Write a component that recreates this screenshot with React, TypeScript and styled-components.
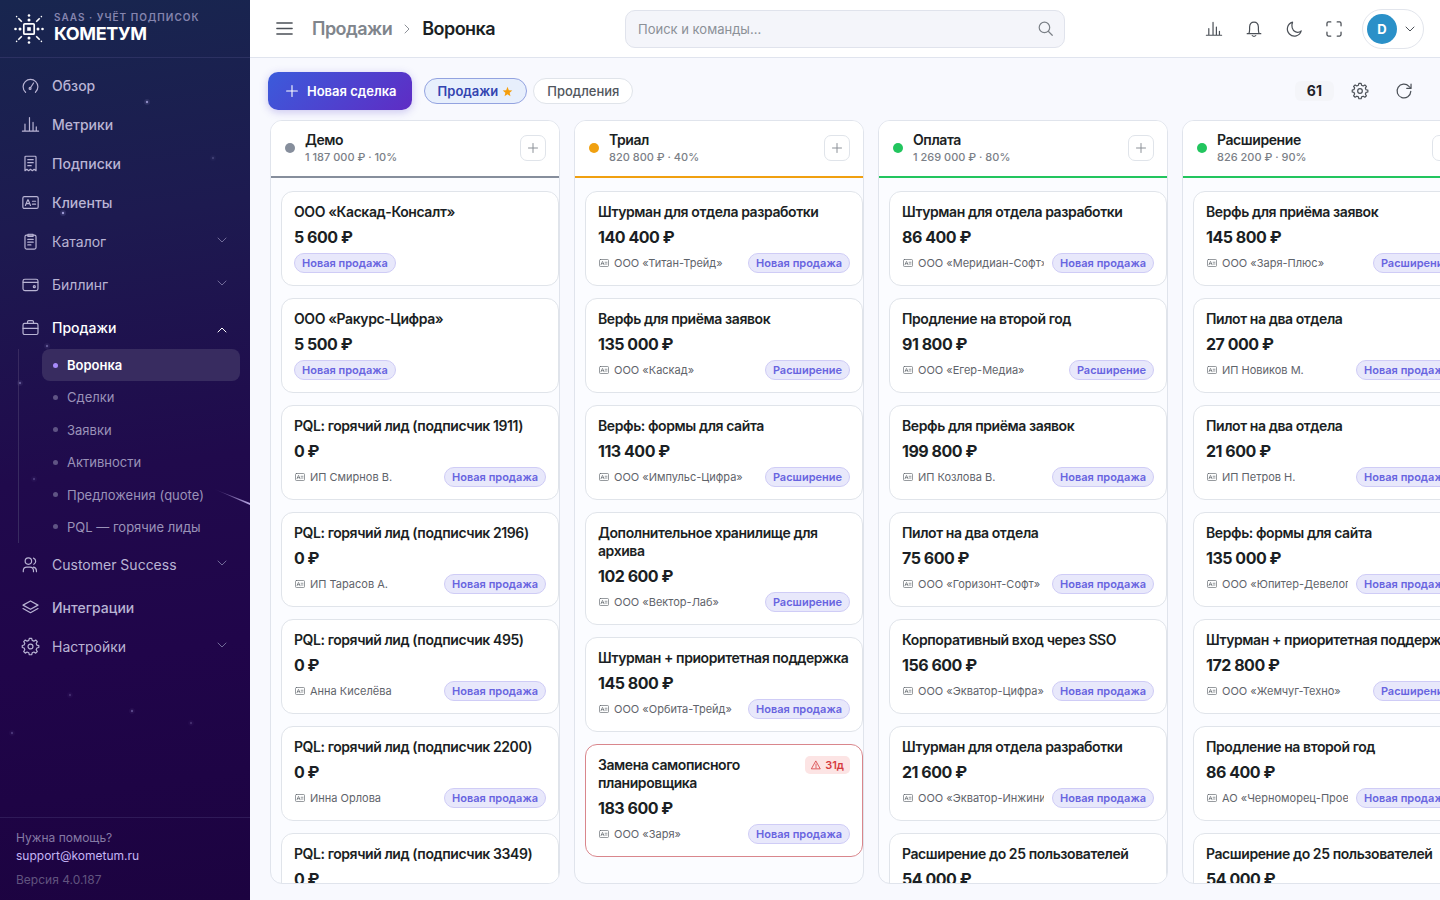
import React from "react";
import styled, { createGlobalStyle, css } from "styled-components";

const GlobalStyle = createGlobalStyle`
  *, *::before, *::after { box-sizing: border-box; }
  body { margin: 0; background: #f8f9fe; color: #1f2329; font-family: Inter, "Liberation Sans", sans-serif; font-size: 14px; }
  button, input { font: inherit; color: inherit; }
  button { cursor: pointer; padding: 0; border: 0; background: none; }
  a { color: inherit; text-decoration: none; }
  h2, h3, p, ul, ol { margin: 0; padding: 0; font-size: inherit; }
  ul, ol { list-style: none; }
`;

/* ---------- icons ---------- */

const paths = {
  gauge: <><path d="M4.200 18A8.700 8.700 0 0 1 1.300 11.600a8.700 8.700 0 0 1 17.400 0 8.700 8.700 0 0 1-2.900 6.400" /><path d="M10.200 12.400 13.600 7" /><circle cx="9.500" cy="13.400" r="1.100" /></>,
  chart: <><path d="M.5 17.800h19M3.500 17.800V9.500M8.800 17.800v-16M13 17.800V7.500M16.800 17.800v-5" /></>,
  receipt: <><path d="M3.500 18.500V2.500q0-1 1-1h11q1 0 1 1v16l-2.200-1.700-2.100 1.700-2.200-1.700-2.200 1.700-2.100-1.700z" /><path d="M6.800 5.500h6.400M6.800 9h6.400M6.800 12.500h4" /></>,
  idcard: <><rect x="1" y="3" width="18" height="14" rx="1.800" /><path d="M4 13.500 6.800 6.800h.4L10 13.500M5 11.300h4M12.300 8.500H16M12.300 12H16" /></>,
  clipboard: <><rect x="3.500" y="2.500" width="13" height="16.500" rx="1.800" /><path d="M7 1.500h6v2.600H7zM6.800 7.500h6.400M6.800 10.800h6.400M6.800 14h3.700" /></>,
  wallet: <><rect x="1.200" y="3.800" width="17.600" height="13.400" rx="2.200" /><path d="M1.500 7.500h17" /><circle cx="14.500" cy="12.500" r="1.200" /></>,
  briefcase: <><rect x="1.200" y="5.200" width="17.600" height="13" rx="1.800" /><path d="M1.200 11h17.600M6.500 5V3.300q0-1.500 1.500-1.500h4q1.500 0 1.500 1.500V5" /></>,
  users: <><circle cx="7.500" cy="6" r="3.800" /><path d="M1.500 18.500v-1.200q0-4.300 4.300-4.300h3.400q4.300 0 4.300 4.300v1.200M13.500 2.500q2.600 1.200 2.600 3.700t-2.200 3.600M13.500 13q3.500.8 3.500 4.500v1" /></>,
  layers: <><path d="m10 2.300 8.800 4.900-8.800 4.900-8.800-4.900zM1.200 11.300l8.800 4.900 8.800-4.900" /></>,
  gear: <><circle cx="10" cy="10" r="2.900" /><path d="m8 2.800.6-2.300h2.800l.6 2.300 2 .9 2.100-1.300 1.900 1.900-1.300 2.100.8 2 2.300.6v2.200l-2.300.6-.8 2 1.300 2.100-1.900 1.900-2.100-1.300-2 .9-.6 2.300H8.600L8 17.400l-2-.9-2.100 1.300L2 15.900l1.300-2.100-.8-2-2.200-.6V8.800l2.200-.6.8-2L2 4.300l1.900-1.900L6 3.700z" /></>,
  down: <path d="m2 6 8 8 8-8" />,
  up: <path d="m2 14 8-8 8 8" />,
  right: <path d="m6 2 8 8-8 8" />,
  menu: <path d="M1 3.500h18M1 10h18M1 16.500h18" />,
  search: <><circle cx="8.600" cy="8.600" r="7" /><path d="m14 14 5 5" /></>,
  bell: <><path d="M1.500 15.800h17M3.500 15.800q1-1.800 1-4.800V7.500Q4.800 1.300 10 1.300T15.500 7.500V11q0 3 1 4.800M7.800 18.300q2.200 1.700 4.400 0" /></>,
  moon: <path d="M8.200 1.500A8.800 8.800 0 1 0 19 12.300a6.800 6.800 0 0 1-7.500 1C7.900 11.500 6.200 6.300 8.200 1.500z" />,
  expand: <path d="M1.200 6V3q0-1.800 1.800-1.800h3M14 1.200h3q1.800 0 1.800 1.800v3M18.800 14v3q0 1.800-1.800 1.800h-3M6 18.800H3q-1.800 0-1.800-1.800v-3" />,
  refresh: <><path d="M18.500 10.500a8.600 8.600 0 1 1-2.300-6.300L18.500 6.500" /><path d="M18.800 1.300v5.400h-5.400" /></>,
  plus: <path d="M10 1v18M1 10h18" />,
  warning: <><path d="m10 2.500 8.500 15.200h-17zM10 8v4.500" /><path d="M10 14.200v1.500" /></>,
};

type IconName = keyof typeof paths;

const Svg = styled.svg`
  flex: none;
  display: block;
  fill: none;
  stroke: currentColor;
  stroke-linecap: round;
  stroke-linejoin: round;
  overflow: visible;
`;

function Icon({ name, size = 16, weight = 1.4 }: { name: IconName; size?: number; weight?: number }) {
  return (
    <Svg viewBox="0 0 20 20" width={size} height={size} strokeWidth={weight} aria-hidden="true">
      {paths[name]}
    </Svg>
  );
}

/* ---------- shell ---------- */

const Shell = styled.div`
  display: flex;
  height: 100vh;
  overflow: hidden;
`;

const Sidebar = styled.aside`
  position: relative;
  display: flex;
  flex-direction: column;
  flex: none;
  width: 250px;
  overflow: hidden;
  color: #b9b4d4;
  background: linear-gradient(172deg, #18264f 0%, #1d1a50 25%, #200a4c 52%, #20054a 72%, #1c0340 100%);
`;

const Sky = styled.svg`
  position: absolute;
  inset: 0;
  width: 100%;
  height: 100%;
  pointer-events: none;
`;

const Brand = styled.a`
  display: flex;
  align-items: center;
  gap: 10px;
  height: 58px;
  padding: 0 14px;
  border-bottom: 1px solid #2c3162;
`;

const BrandText = styled.span`
  display: flex;
  flex-direction: column;
  padding-bottom: 3px;
`;

const BrandTag = styled.small`
  font-size: 10px;
  line-height: 14px;
  font-weight: 600;
  letter-spacing: 0.1em;
  color: #8584ae;
`;

const BrandName = styled.strong`
  font-size: 18px;
  line-height: 20px;
  font-weight: 700;
  letter-spacing: -0.02em;
  color: #fff;
`;

const Nav = styled.nav`
  flex: 1;
  padding-top: 8px;
`;

const NavItem = styled.a<{ $group?: boolean; $open?: boolean }>`
  display: flex;
  align-items: center;
  gap: 13px;
  height: 39px;
  padding: 0 23px 0 22px;
  font-size: 14px;
  font-weight: ${(p) => (p.$group && !p.$open ? 400 : 500)};
  color: ${(p) => (p.$open ? "#fff" : "#b9b4d4")};
  ${(p) => p.$group && css`margin-bottom: 4px;`}
  ${(p) => p.$open && css`margin-bottom: 2px;`}

  & > span { flex: 1; }
  & > svg:first-child { color: #b9b4d4; }
`;

const Caret = styled.i<{ $open?: boolean }>`
  color: ${(p) => (p.$open ? "#fff" : "#706a98")};
  margin-top: ${(p) => (p.$open ? "4px" : "-4px")};
`;

const SubList = styled.ul`
  display: flex;
  flex-direction: column;
  justify-content: space-between;
  height: 194px;
  margin: 0 10px 2px 18px;
  padding-left: 23px;
  border-left: 1px solid #382a60;
`;

const SubItem = styled.a<{ $active?: boolean }>`
  display: flex;
  align-items: center;
  gap: 9px;
  height: 32px;
  padding: 0 11px;
  border-radius: 8px;
  font-size: 13px;
  font-weight: ${(p) => (p.$active ? 600 : 400)};
  color: ${(p) => (p.$active ? "#fff" : "#9a92b8")};
  background: ${(p) => (p.$active ? "#382c60" : "transparent")};

  &::before {
    content: "";
    width: 5px;
    height: 5px;
    border-radius: 50%;
    background: ${(p) => (p.$active ? "#a78bfa" : "#5f5484")};
  }
`;

const Help = styled.footer`
  display: flex;
  flex-direction: column;
  padding: 11px 16px 11px;
  border-top: 1px solid #2f1a58;
  font-size: 12px;
  line-height: 18px;
  color: #857aa4;

  a { color: #c5b5f5; }
  small { margin-top: 6px; font-size: 12px; color: #61547f; }
`;

const Main = styled.div`
  display: flex;
  flex-direction: column;
  flex: 1;
  min-width: 0;
`;

const Header = styled.header`
  display: grid;
  grid-template-columns: 1fr minmax(200px, 440px) 1fr;
  align-items: center;
  height: 58px;
  padding: 0 16px;
  background: #fff;
  border-bottom: 1px solid #e0e4ee;
`;

const HeaderLeft = styled.div`
  display: flex;
  align-items: center;
  gap: 18px;
  padding-left: 8px;
`;

const IconButton = styled.button<{ $width?: number; $height?: number }>`
  display: grid;
  place-items: center;
  width: ${(p) => p.$width ?? 40}px;
  height: ${(p) => p.$height ?? 38}px;
  color: #4b5057;
`;

const Crumbs = styled.nav`
  display: flex;
  align-items: center;
  gap: 10px;
  font-size: 18px;
  font-weight: 600;
  letter-spacing: -0.03em;
  color: #80858c;

  strong { font-weight: 600; color: #1b1f24; }
`;

const Search = styled.label`
  display: flex;
  align-items: center;
  height: 38px;
  padding: 0 11px 0 12px;
  border: 1px solid #e0e3ec;
  border-radius: 10px;
  background: #f4f5fa;
  color: #7b8087;

  input {
    flex: 1;
    min-width: 0;
    padding: 0;
    border: 0;
    outline: 0;
    background: none;
    font-size: 13px;
  }
  input::placeholder { color: #8b9097; opacity: 1; }
`;

const HeaderRight = styled.div`
  display: flex;
  align-items: center;
  justify-content: flex-end;
`;

const Profile = styled.button`
  display: flex;
  align-items: center;
  gap: 8px;
  height: 40px;
  margin-left: 8px;
  padding: 0 8px 0 4px;
  border: 1px solid #e2e5ec;
  border-radius: 20px;
  background: #fff;
  color: #4b5057;
`;

const Avatar = styled.span`
  display: grid;
  place-items: center;
  width: 30px;
  height: 30px;
  border-radius: 50%;
  background: #2a90c8;
  color: #fff;
  font-size: 13px;
  font-weight: 700;
`;

const Toolbar = styled.div`
  display: flex;
  align-items: center;
  justify-content: space-between;
  padding: 14px 14px 10px 18px;
`;

const ToolGroup = styled.div<{ $gap?: number }>`
  display: flex;
  align-items: center;
  gap: ${(p) => p.$gap ?? 6}px;
`;

const Primary = styled.button`
  display: flex;
  align-items: center;
  gap: 9px;
  height: 38px;
  margin-right: 6px;
  padding: 0 15px 0 18px;
  border-radius: 10px;
  background: linear-gradient(135deg, #3b5bdb, #5f2cc4);
  box-shadow: 0 2px 8px rgba(80, 60, 200, 0.28);
  color: #fff;
  font-size: 13px;
  font-weight: 600;
`;

const Pill = styled.button<{ $active?: boolean }>`
  display: flex;
  align-items: center;
  gap: 4px;
  height: 26px;
  padding: 0 13px;
  border: 1px solid ${(p) => (p.$active ? "#93a3e0" : "#e0e4ea")};
  border-radius: 13px;
  background: ${(p) => (p.$active ? "#e7effc" : "#fff")};
  color: ${(p) => (p.$active ? "#3344b0" : "#51565d")};
  font-size: 13px;
  font-weight: ${(p) => (p.$active ? 600 : 500)};

  svg { color: #f59e0b; fill: currentColor; }
`;

const Total = styled.output`
  padding: 0 12px;
  border-radius: 6px;
  background: #f4f5f9;
  font-size: 14px;
  line-height: 20px;
  font-weight: 700;
  margin-right: 4px;
`;

/* ---------- board ---------- */

const Board = styled.main`
  display: flex;
  flex: 1;
  gap: 14px;
  min-height: 0;
  padding: 0 0 16px 20px;
  overflow: hidden;
`;

const Column = styled.section`
  display: flex;
  flex-direction: column;
  flex: none;
  width: 290px;
  border: 1px solid #e0e4ec;
  border-radius: 12px;
  background: #fbfcff;
  overflow: hidden;
`;

const ColumnHead = styled.header<{ $color: string }>`
  display: flex;
  align-items: center;
  gap: 10px;
  height: 57px;
  padding: 0 13px 2px 14px;
  background: #fff;
  border-bottom: 2px solid ${(p) => p.$color};

  &::before {
    content: "";
    width: 10px;
    height: 10px;
    border-radius: 50%;
    background: ${(p) => p.$color};
  }
`;

const ColumnTitle = styled.div`
  flex: 1;

  h2 { font-size: 14px; line-height: 18px; font-weight: 600; letter-spacing: -0.03em; color: #1b1f24; }
  p { font-size: 11px; line-height: 16px; font-weight: 500; color: #7b8087; }
`;

const AddButton = styled(IconButton)`
  border: 1px solid #e0e4ea;
  border-radius: 7px;
  background: #fff;
  color: #8b9097;
`;

const Cards = styled.ul`
  display: flex;
  flex-direction: column;
  flex: 1;
  gap: 12px;
  min-height: 0;
  padding: 13px 0 0 10px;
  overflow: hidden;
`;

const Card = styled.li<{ $late?: boolean }>`
  flex: none;
  padding: 11px 12px 12px;
  border: 1px solid ${(p) => (p.$late ? "#d9868c" : "#e0e4ea")};
  border-radius: 12px;
  background: #fff;
`;

const CardTop = styled.div`
  display: flex;
  align-items: flex-start;
  justify-content: space-between;
  gap: 8px;

  h3 { font-size: 14px; line-height: 18px; font-weight: 600; letter-spacing: -0.03em; color: #1b1f24; }
`;

const Price = styled.p`
  margin: 4px 0;
  font-size: 16px;
  line-height: 24px;
  font-weight: 700;
  letter-spacing: -0.03em;
  color: #1b1f24;
`;

const CardMeta = styled.div`
  display: flex;
  align-items: center;
  justify-content: space-between;
  gap: 8px;
`;

const Client = styled.span`
  display: flex;
  align-items: center;
  gap: 5px;
  min-width: 0;
  padding-left: 1px;
  font-size: 11px;
  line-height: 20px;
  color: #5f646b;

  span { overflow: hidden; white-space: nowrap; }
`;

const Tag = styled.span`
  flex: none;
  padding: 0 7px;
  border: 1px solid #cfccf6;
  border-radius: 10px;
  background: #e8e8fb;
  color: #6864e0;
  font-size: 11px;
  line-height: 18px;
  font-weight: 600;
`;

const Late = styled.span`
  display: flex;
  flex: none;
  align-items: center;
  gap: 4px;
  height: 18px;
  padding: 0 6px;
  border-radius: 5px;
  background: #fce4e4;
  color: #d63b3f;
  font-size: 11px;
  font-weight: 600;
`;

/* ---------- data ---------- */

type Deal = { title: string; price: string; client?: string; tag: string; late?: string };

const N = "Новая продажа";
const R = "Расширение";

const deal = (title: string, price: string, client: string | undefined, tag: string, late?: string): Deal => ({ title, price, client, tag, late });

const columns: { name: string; total: string; color: string; deals: Deal[] }[] = [
  {
    name: "Демо", total: "1 187 000 ₽ · 10%", color: "#868e9c",
    deals: [
      deal("ООО «Каскад-Консалт»", "5 600 ₽", undefined, N),
      deal("ООО «Ракурс-Цифра»", "5 500 ₽", undefined, N),
      deal("PQL: горячий лид (подписчик 1911)", "0 ₽", "ИП Смирнов В.", N),
      deal("PQL: горячий лид (подписчик 2196)", "0 ₽", "ИП Тарасов А.", N),
      deal("PQL: горячий лид (подписчик 495)", "0 ₽", "Анна Киселёва", N),
      deal("PQL: горячий лид (подписчик 2200)", "0 ₽", "Инна Орлова", N),
      deal("PQL: горячий лид (подписчик 3349)", "0 ₽", undefined, N),
    ],
  },
  {
    name: "Триал", total: "820 800 ₽ · 40%", color: "#f0a010",
    deals: [
      deal("Штурман для отдела разработки", "140 400 ₽", "ООО «Титан-Трейд»", N),
      deal("Верфь для приёма заявок", "135 000 ₽", "ООО «Каскад»", R),
      deal("Верфь: формы для сайта", "113 400 ₽", "ООО «Импульс-Цифра»", R),
      deal("Дополнительное хранилище для архива", "102 600 ₽", "ООО «Вектор-Лаб»", R),
      deal("Штурман + приоритетная поддержка", "145 800 ₽", "ООО «Орбита-Трейд»", N),
      deal("Замена самописного планировщика", "183 600 ₽", "ООО «Заря»", N, "31д"),
    ],
  },
  {
    name: "Оплата", total: "1 269 000 ₽ · 80%", color: "#22c55e",
    deals: [
      deal("Штурман для отдела разработки", "86 400 ₽", "ООО «Меридиан-Софт»", N),
      deal("Продление на второй год", "91 800 ₽", "ООО «Егер-Медиа»", R),
      deal("Верфь для приёма заявок", "199 800 ₽", "ИП Козлова В.", N),
      deal("Пилот на два отдела", "75 600 ₽", "ООО «Горизонт-Софт»", N),
      deal("Корпоративный вход через SSO", "156 600 ₽", "ООО «Экватор-Цифра»", N),
      deal("Штурман для отдела разработки", "21 600 ₽", "ООО «Экватор-Инжиниринг»", N),
      deal("Расширение до 25 пользователей", "54 000 ₽", undefined, N),
    ],
  },
  {
    name: "Расширение", total: "826 200 ₽ · 90%", color: "#22c55e",
    deals: [
      deal("Верфь для приёма заявок", "145 800 ₽", "ООО «Заря-Плюс»", R),
      deal("Пилот на два отдела", "27 000 ₽", "ИП Новиков М.", N),
      deal("Пилот на два отдела", "21 600 ₽", "ИП Петров Н.", N),
      deal("Верфь: формы для сайта", "135 000 ₽", "ООО «Юпитер-Девелопмент»", N),
      deal("Штурман + приоритетная поддержка", "172 800 ₽", "ООО «Жемчуг-Техно»", R),
      deal("Продление на второй год", "86 400 ₽", "АО «Черноморец-Проект»", N),
      deal("Расширение до 25 пользователей", "54 000 ₽", undefined, N),
    ],
  },
];

const nav: { icon: IconName; label: string; group?: boolean; sub?: string[] }[] = [
  { icon: "gauge", label: "Обзор" },
  { icon: "chart", label: "Метрики" },
  { icon: "receipt", label: "Подписки" },
  { icon: "idcard", label: "Клиенты" },
  { icon: "clipboard", label: "Каталог", group: true },
  { icon: "wallet", label: "Биллинг", group: true },
  {
    icon: "briefcase", label: "Продажи", group: true,
    sub: ["Воронка", "Сделки", "Заявки", "Активности", "Предложения (quote)", "PQL — горячие лиды"],
  },
  { icon: "users", label: "Customer Success", group: true },
  { icon: "layers", label: "Интеграции" },
  { icon: "gear", label: "Настройки", group: true },
];

const stars = [
  [147, 102, 0.7], [213, 158, 0.2], [63, 213, 0.8], [47, 346, 0.4], [20, 383, 0.4],
  [34, 479, 0.25], [70, 695, 0.2], [132, 711, 0.35], [191, 723, 0.2], [12, 733, 0.25],
];

function Logo() {
  return (
    <svg width="30" height="30" viewBox="0 0 30 30" fill="none" stroke="#fff" aria-hidden="true">
      <rect x="9.800" y="9.800" width="10.400" height="10.400" rx="1" strokeWidth="1.700" />
      <rect x="13.200" y="13.200" width="3.600" height="3.600" fill="#fff" stroke="none" />
      <path d="m7.800 7.800-3.500-3.500M22.200 7.800l3.500-3.500M7.800 22.200l-3.500 3.500M22.200 22.200l3.500 3.500" strokeWidth="1.600" />
      <g fill="#fff" stroke="none">
        <circle cx="15" cy="1.500" r="1.300" /><circle cx="15" cy="6" r="1.500" />
        <circle cx="15" cy="28.500" r="1.300" /><circle cx="15" cy="24" r="1.500" />
        <circle cx="1.500" cy="15" r="1.300" /><circle cx="6" cy="15" r="1.500" />
        <circle cx="28.500" cy="15" r="1.300" /><circle cx="24" cy="15" r="1.500" />
        <circle cx="2.600" cy="2.600" r=".8" /><circle cx="27.400" cy="2.600" r=".8" />
        <circle cx="2.600" cy="27.400" r=".8" /><circle cx="27.400" cy="27.400" r=".8" />
      </g>
    </svg>
  );
}

function DealCard({ item }: { item: Deal }) {
  return (
    <Card $late={Boolean(item.late)}>
      <CardTop>
        <h3>{item.title}</h3>
        {item.late && <Late><Icon name="warning" size={10} weight={1.6} />{item.late}</Late>}
      </CardTop>
      <Price>{item.price}</Price>
      <CardMeta>
        {item.client && <Client><Icon name="idcard" size={10} weight={1.3} /><span>{item.client}</span></Client>}
        <Tag>{item.tag}</Tag>
      </CardMeta>
    </Card>
  );
}

export default function App() {
  return (
    <Shell>
      <GlobalStyle />
      <Sidebar>
        <Sky aria-hidden="true">
          <defs>
            <linearGradient id="tail" x1="0" x2="1" y1="0" y2="0">
              <stop offset="0" stopColor="#c9b8f5" stopOpacity="0" />
              <stop offset="1" stopColor="#c9b8f5" stopOpacity="0.9" />
            </linearGradient>
          </defs>
          {stars.map(([x, y, o]) => (
            <g key={`${x}-${y}`} fill="#b9b4f0">
              <circle cx={x} cy={y} r="3" opacity={o * 0.15} />
              <circle cx={x} cy={y} r="1.200" opacity={o} />
            </g>
          ))}
          <path d="m214 489 36 14v2z" fill="url(#tail)" />
        </Sky>
        <Brand href="#">
          <Logo />
          <BrandText>
            <BrandTag>SAAS · УЧЁТ ПОДПИСОК</BrandTag>
            <BrandName>КОМЕТУМ</BrandName>
          </BrandText>
        </Brand>
        <Nav aria-label="Разделы">
          {nav.map((n) => (
            <React.Fragment key={n.label}>
              <NavItem href="#" $group={n.group} $open={Boolean(n.sub)}>
                <Icon name={n.icon} size={17} />
                <span>{n.label}</span>
                {n.group && <Caret $open={Boolean(n.sub)}><Icon name={n.sub ? "up" : "down"} size={10} weight={2} /></Caret>}
              </NavItem>
              {n.sub && (
                <SubList>
                  {n.sub.map((s, i) => <li key={s}><SubItem href="#" $active={i === 0}>{s}</SubItem></li>)}
                </SubList>
              )}
            </React.Fragment>
          ))}
        </Nav>
        <Help>
          <span>Нужна помощь?</span>
          <a href="mailto:support@kometum.ru">support@kometum.ru</a>
          <small>Версия 4.0.187</small>
        </Help>
      </Sidebar>

      <Main>
        <Header>
          <HeaderLeft>
            <IconButton $width={20} aria-label="Меню"><Icon name="menu" size={17} weight={1.6} /></IconButton>
            <Crumbs aria-label="Навигация">
              <a href="#">Продажи</a>
              <Icon name="right" size={10} weight={1.8} />
              <strong>Воронка</strong>
            </Crumbs>
          </HeaderLeft>
          <Search>
            <input type="search" placeholder="Поиск и команды..." aria-label="Поиск и команды" />
            <Icon name="search" size={15} weight={1.6} />
          </Search>
          <HeaderRight>
            <IconButton aria-label="Отчёты"><Icon name="chart" size={16} weight={1.5} /></IconButton>
            <IconButton aria-label="Уведомления"><Icon name="bell" size={16} weight={1.5} /></IconButton>
            <IconButton aria-label="Тёмная тема"><Icon name="moon" size={16} weight={1.5} /></IconButton>
            <IconButton aria-label="На весь экран"><Icon name="expand" size={16} weight={1.6} /></IconButton>
            <Profile aria-label="Профиль"><Avatar>D</Avatar><Icon name="down" size={10} weight={2} /></Profile>
          </HeaderRight>
        </Header>

        <Toolbar>
          <ToolGroup>
            <Primary><Icon name="plus" size={12} weight={1.8} />Новая сделка</Primary>
            <Pill $active>
              Продажи
              <svg width="11" height="11" viewBox="0 0 20 20" aria-hidden="true"><path d="m10 1.500 2.400 6 6.300.5-4.800 4.200 1.500 6.300L10 15.100l-5.400 3.400 1.500-6.300L1.300 8l6.300-.5z" /></svg>
            </Pill>
            <Pill>Продления</Pill>
          </ToolGroup>
          <ToolGroup $gap={0}>
            <Total>61</Total>
            <IconButton $width={44} aria-label="Настройки воронки"><Icon name="gear" size={16} weight={1.5} /></IconButton>
            <IconButton $width={44} aria-label="Обновить"><Icon name="refresh" size={16} weight={1.5} /></IconButton>
          </ToolGroup>
        </Toolbar>

        <Board>
          {columns.map((c) => (
            <Column key={c.name}>
              <ColumnHead $color={c.color}>
                <ColumnTitle>
                  <h2>{c.name}</h2>
                  <p>{c.total}</p>
                </ColumnTitle>
                <AddButton $width={26} $height={26} aria-label={`Добавить сделку: ${c.name}`}><Icon name="plus" size={10} weight={2} /></AddButton>
              </ColumnHead>
              <Cards>
                {c.deals.map((d, i) => <DealCard key={i} item={d} />)}
              </Cards>
            </Column>
          ))}
        </Board>
      </Main>
    </Shell>
  );
}
